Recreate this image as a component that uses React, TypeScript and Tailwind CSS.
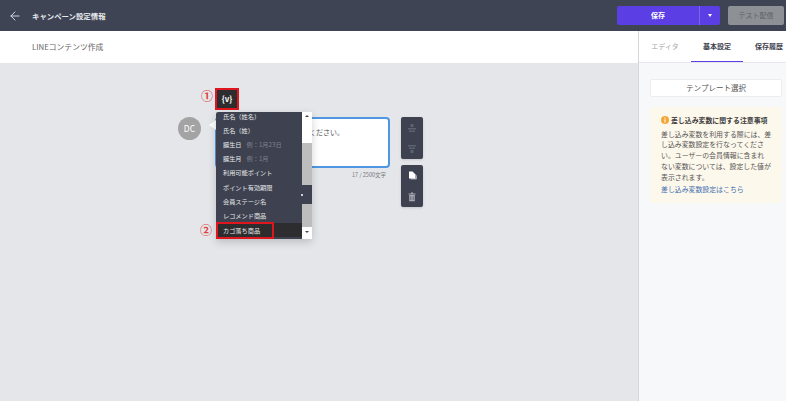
import React from 'react';
import { ArrowLeft } from 'lucide-react';

const font = { fontFamily: '"Noto Sans CJK JP", "Noto Sans", sans-serif' };

const variables = [
  { name: '氏名（姓名）' },
  { name: '氏名（姓）' },
  { name: '誕生日', hint: '例：1月23日' },
  { name: '誕生月', hint: '例：1月' },
  { name: '利用可能ポイント' },
  { name: 'ポイント有効期限' },
  { name: '会員ステージ名' },
  { name: 'レコメンド商品' },
  { name: 'カゴ落ち商品', active: true },
];

const noticeLines = [
  '差し込み変数を利用する際には、差',
  'し込み変数設定を行なってくださ',
  'い。ユーザーの会員情報に含まれ',
  'ない変数については、設定した値が',
  '表示されます。',
];

const MoveUpIcon = () => (
  <svg width="10" height="10" viewBox="0 0 10 10" fill="#5d6270">
    <path d="M3.5 1h3v3h-3zM1 5h8v1.5H1zM2 7.5h6V9H2z" />
  </svg>
);

const MoveDownIcon = () => (
  <svg width="10" height="10" viewBox="0 0 10 10" fill="#5d6270">
    <path d="M1 1h8v1.5H1zM2 3.5h6V5H2zM3.5 6h3v3h-3z" />
  </svg>
);

const CopyIcon = () => (
  <svg width="10" height="10" viewBox="0 0 10 10" fill="#fff">
    <path d="M2 0.5h3.5L8.5 3.5V7.5H2z" />
    <path d="M3.5 8.3h6V4.5l-.6-.6v3.6H3.5z" />
  </svg>
);

const TrashIcon = () => (
  <svg width="10" height="10" viewBox="0 0 10 10" fill="#a9abb2">
    <path d="M1.5 1.5h7v1h-7zM4 .6h2v1H4zM2.2 3h5.6v6.2H2.2zM3.5 4.2v3.8h.7V4.2zM5.8 4.2v3.8h.7V4.2z" fillRule="evenodd" />
  </svg>
);

const Header = () => (
  <header className="h-[31px] shrink-0 bg-[#3e4453] flex items-center pl-[8px] pr-[2px]">
    <ArrowLeft size={14} strokeWidth={1.5} className="text-gray-200" />
    <span className="ml-[10px] text-[7.4px] font-bold text-[#e6e8ec]">キャンペーン設定情報</span>
    <div className="ml-auto flex items-center gap-[8px]">
      <div className="w-[103px] h-[19px] rounded-[2px] bg-[#5b3fe4] flex items-center text-white">
        <span className="w-[82px] text-center text-[7px] font-bold">保存</span>
        <span className="w-px h-full bg-[#7b66ea]" />
        <span className="flex-1 flex justify-center">
          <span className="w-0 h-0 border-l-[2.5px] border-r-[2.5px] border-t-[3px] border-l-transparent border-r-transparent border-t-white" />
        </span>
      </div>
      <div className="w-[56px] h-[19px] rounded-[2px] bg-[#8d9196] flex items-center justify-center text-[7px] text-[#5d6167]">
        テスト配信
      </div>
    </div>
  </header>
);

const VariableMenu = () => (
  <div className="absolute left-[216px] top-[49px] w-[96px] h-[127px] flex rounded-[2px] bg-white shadow-[0_3px_8px_rgba(0,0,0,0.18)]">
    <ul className="w-[86px] h-full bg-[#3e4250] overflow-hidden rounded-l-[2px] text-[6.2px] text-[#e6e7ea]">
      {variables.map((v, i) => (
        <li
          key={v.name}
          className={`flex pl-[7px] gap-[5px] whitespace-nowrap ${i === 0 ? 'h-[11px] items-start' : 'h-[14.3px] items-center'} ${v.active ? 'bg-[#2d2d2f]' : ''}`}
        >
          <span>{v.name}</span>
          {v.hint && <span className="text-[#7f838d]">{v.hint}</span>}
        </li>
      ))}
    </ul>
    <div className="flex-1 flex flex-col items-center bg-white">
      <span className="mt-[3px] w-0 h-0 border-l-[2px] border-r-[2px] border-b-[2px] border-l-transparent border-r-transparent border-b-[#444]" />
      <div className="mt-[26px] w-full h-[84px] bg-[#bdbdbd]" />
      <span className="mt-[4px] w-0 h-0 border-l-[2px] border-r-[2px] border-t-[2px] border-l-transparent border-r-transparent border-t-[#444]" />
    </div>
  </div>
);

const ToolGroup = ({ children }: { children: React.ReactNode }) => (
  <div className="w-[22px] h-[42px] rounded-[2px] bg-[#3e4250] shadow-sm flex flex-col items-center justify-around">
    {children}
  </div>
);

const Canvas = () => (
  <main className="relative flex-1 bg-[#e4e6ea] pl-[178px] pt-[54px]">
    <div className="flex items-start">
      <div className="w-[23px] h-[23px] rounded-full bg-[#a3a3a3] flex items-center justify-center text-[8.5px] text-white">DC</div>
      <div className="relative ml-[14px] w-[175px]">
        <span className="absolute left-[-6px] top-[3px] w-0 h-0 border-t-[5px] border-b-[5px] border-r-[7px] border-t-transparent border-b-transparent border-r-white" />
        <div className="h-[51px] rounded-[4px] border-2 border-[#4f97e3] bg-white pl-[92px] pt-[8px] text-[7px] text-[#555] whitespace-nowrap">
          ください。
        </div>
        <p className="mt-[3px] pr-[4px] text-right text-[5.5px] text-[#777]">17 / 2500文字</p>
      </div>
      <div className="ml-[11px] flex flex-col gap-[6px]">
        <ToolGroup>
          <MoveUpIcon />
          <MoveDownIcon />
        </ToolGroup>
        <ToolGroup>
          <CopyIcon />
          <TrashIcon />
        </ToolGroup>
      </div>
    </div>

    {/* 手順の注釈 */}
    <span className="absolute left-[201px] top-[26px] text-[12px] leading-[14px] font-bold text-[#e0453f]">①</span>
    <div className="absolute left-[215px] top-[25px] w-[24px] h-[22px] border-[2px] border-[#e0161e] bg-[#2d2d2f] flex items-center justify-center text-[8px] font-bold text-white">
      {'{v}'}
    </div>
    <VariableMenu />
    <div className="absolute left-[302px] top-[122px] w-[10px] h-[19px] bg-[#3e4250] flex items-center">
      <span className="ml-[-1px] w-[2px] h-[2px] rounded-full bg-white" />
    </div>
    <span className="absolute left-[200px] top-[160px] text-[12px] leading-[14px] font-bold text-[#e0453f]">②</span>
    <div className="absolute left-[216px] top-[159px] w-[58px] h-[17px] border-[2px] border-[#e0161e]" />
  </main>
);

const tabs = ['エディタ', '基本設定', '保存履歴'];

const SidePanel = () => (
  <aside className="w-[148px] shrink-0 bg-[#f7f8fa] border-l border-[#d4d6da] flex flex-col -mt-[32px] z-10">
    <nav className="h-[32px] shrink-0 bg-white flex text-[7px] border-b border-[#e6e7ea]">
      {tabs.map((t, i) => (
        <div
          key={t}
          className={`w-[52px] shrink-0 flex items-center justify-center whitespace-nowrap ${i === 0 ? 'text-[#a6a8ad]' : 'text-[#3d4250] font-bold'} ${i === 1 ? 'border-b-[1.5px] border-[#5b3fe4]' : ''}`}
        >
          {t}
        </div>
      ))}
    </nav>
    <div className="px-[11px] pt-[16px] flex flex-col gap-[10px]">
      <div className="h-[18px] w-[132px] bg-white rounded-[2px] border border-[#eceded] flex items-center justify-center text-[7.5px] text-[#555]">
        テンプレート選択
      </div>
      <div className="w-[132px] h-[96px] bg-[#fdf8ec] rounded-[2px] pl-[11px] pr-[4px] pt-[8px] text-[6.9px] leading-[10.7px] text-[#555] whitespace-nowrap">
        <p className="mb-[3px] flex items-center gap-[2px] font-bold text-[#3d3d3d]">
          <svg width="8" height="8" viewBox="0 0 8 8" className="shrink-0">
            <circle cx="4" cy="4" r="4" fill="#f3a738" />
            <path d="M3.5 1.5h1v1h-1zM3.5 3.2h1v3.3h-1z" fill="#fff" />
          </svg>
          差し込み変数に関する注意事項
        </p>
        {noticeLines.map((line) => (
          <p key={line}>{line}</p>
        ))}
        <p className="mt-[2px] text-[#3f6fb0]">差し込み変数設定はこちら</p>
      </div>
    </div>
  </aside>
);

export default function App() {
  return (
    <div className="h-screen w-full flex flex-col overflow-hidden bg-white" style={font}>
      <Header />
      <div className="h-[32px] shrink-0 bg-white flex items-center pl-[32px] text-[7.8px] text-[#666]">LINEコンテンツ作成</div>
      <div className="flex-1 flex min-h-0">
        <Canvas />
        <SidePanel />
      </div>
    </div>
  );
}
